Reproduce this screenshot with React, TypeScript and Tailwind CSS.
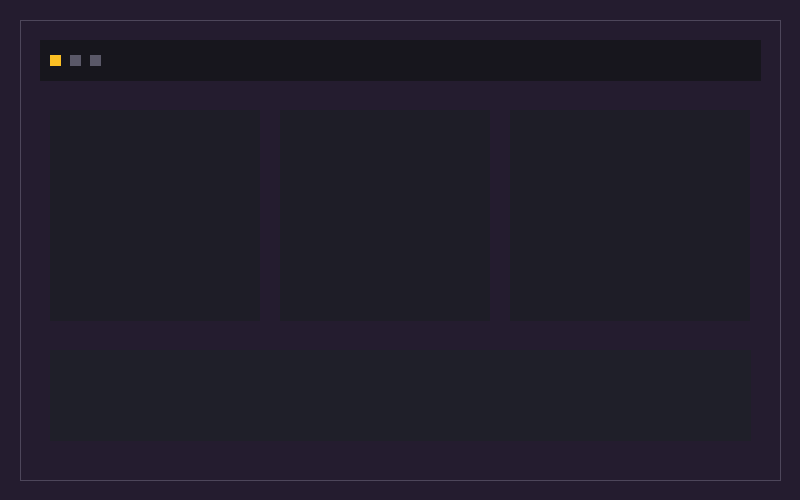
export default function App() {
  return (
    <div className="w-[800px] h-[500px] bg-[#241c2f] p-[20px]">
      <div className="w-[761px] h-[461px] border border-[#4d465a] px-[19px] pt-[19px]">
        {/* Title bar */}
        <div className="h-[41px] bg-[#17161d] flex items-center gap-[9px] pl-[10px]">
          <span className="w-[11px] h-[11px] bg-[#fbbf24]" />
          <span className="w-[11px] h-[11px] bg-[#5a5868]" />
          <span className="w-[11px] h-[11px] bg-[#5a5868]" />
        </div>

        <div className="px-[10px] pt-[29px]">
          {/* Panels */}
          <div className="flex gap-[20px] h-[211px]">
            <div className="w-[210px] bg-[#1e1d27]" />
            <div className="w-[210px] bg-[#1e1d27]" />
            <div className="w-[240px] bg-[#1e1d27]" />
          </div>

          {/* Footer panel */}
          <div className="mt-[29px] h-[91px] w-[701px] bg-[#1f1f29]" />
        </div>
      </div>
    </div>
  );
}
